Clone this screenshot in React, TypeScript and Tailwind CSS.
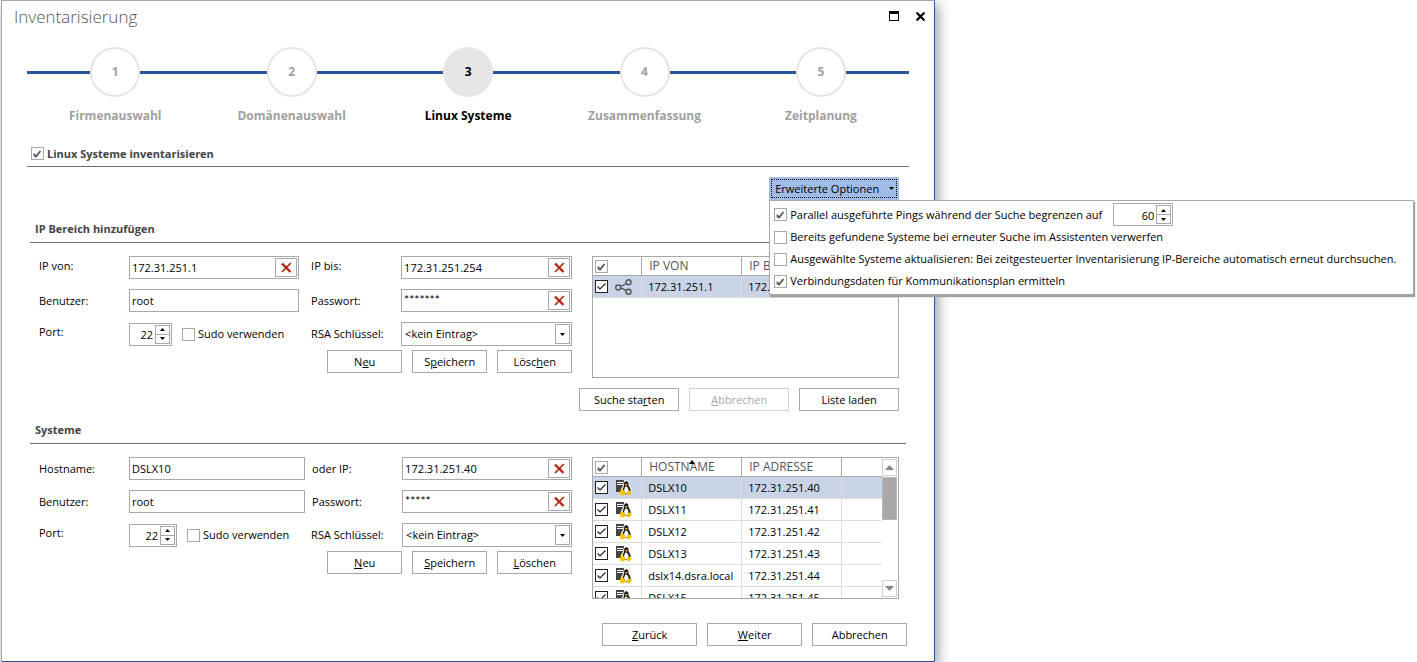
import { ReactNode } from "react";

const steps = ["Firmenauswahl", "Domänenauswahl", "Linux Systeme", "Zusammenfassung", "Zeitplanung"];

const hosts = [
    { name: "DSLX10", ip: "172.31.251.40" },
    { name: "DSLX11", ip: "172.31.251.41" },
    { name: "DSLX12", ip: "172.31.251.42" },
    { name: "DSLX13", ip: "172.31.251.43" },
    { name: "dslx14.dsra.local", ip: "172.31.251.44" },
    { name: "DSLX15", ip: "172.31.251.45" },
];

const CheckBox = ({ id, checked, dark, label }: { id?: string, checked?: boolean, dark?: boolean, label?: string }) => (
    <span className="relative block size-[13px] shrink-0">
        <input
            id={id}
            type="checkbox"
            aria-label={label}
            defaultChecked={checked}
            className={`peer block size-[13px] appearance-none border bg-white ${dark ? "border-[#222]" : "border-[#a8a8a8]"}`}
        />
        <svg viewBox="0 0 13 13" className="pointer-events-none absolute inset-0 hidden size-[13px] peer-checked:block" fill="none">
            {dark
                ? <path d="M2.5 6.5 L5 9 L10.5 3.5" stroke="#222" strokeWidth="1.2" />
                : <path d="M3.5 6.5 V8.5 L5 9.5 L9.5 4" stroke="#555" strokeWidth="1.8" />}
        </svg>
    </span>
);

const Field = ({ id, value, clear, secret }: { id: string, value: string, clear?: boolean, secret?: boolean }) => (
    <div className="flex h-[23px] border border-[#a8a8a8] bg-white p-px">
        <input
            id={id}
            type="text"
            defaultValue={value}
            className={`w-0 min-w-0 flex-1 px-px outline-none ${secret ? "pb-0.5 font-['Lato',sans-serif] text-xs" : ""}`}
        />
        {clear && (
            <button aria-label="Feld leeren" className="flex w-[22px] shrink-0 items-center justify-center border border-[#a8a8a8]">
                <svg viewBox="0 0 11 11" className="size-[11px]" fill="none" stroke="#b3260f">
                    <path d="M1 1.5 L9.5 10" strokeWidth="2.4" />
                    <path d="M9.8 1 L1 10" strokeWidth="1.7" />
                </svg>
            </button>
        )}
    </div>
);

const Spinner = ({ id, value, width }: { id: string, value: number, width: string }) => (
    <div className={`flex h-[23px] shrink-0 border border-[#a8a8a8] bg-white p-px ${width}`}>
        <input id={id} type="text" inputMode="numeric" defaultValue={value} className="w-0 min-w-0 flex-1 pt-0.5 pr-0.5 text-right outline-none" />
        <div className="flex w-[15px] shrink-0 flex-col">
            <button aria-label="Erhöhen" className="flex flex-1 items-center justify-center border border-[#a8a8a8]">
                <svg viewBox="0 0 5 3" className="h-[3px] w-[5px]"><path d="M0 3 L2.5 0 L5 3 Z" /></svg>
            </button>
            <button aria-label="Verringern" className="flex flex-1 items-center justify-center border border-t-0 border-[#a8a8a8]">
                <svg viewBox="0 0 5 3" className="h-[3px] w-[5px]"><path d="M0 0 L2.5 3 L5 0 Z" /></svg>
            </button>
        </div>
    </div>
);

const KeySelect = ({ id }: { id: string }) => (
    <div className="relative">
        <select id={id} className="block h-6 w-full appearance-none border border-[#a8a8a8] bg-white px-[3px] outline-none">
            <option>&lt;kein Eintrag&gt;</option>
        </select>
        <span className="pointer-events-none absolute inset-y-0.5 right-0.5 flex w-[15px] items-center justify-center border border-[#a8a8a8]">
            <svg viewBox="0 0 5 3" className="h-[3px] w-[5px]"><path d="M0 0 L2.5 3 L5 0 Z" /></svg>
        </span>
    </div>
);

const Button = ({ children, width, disabled }: { children: ReactNode, width: string, disabled?: boolean }) => (
    <button
        disabled={disabled}
        className={`h-[23px] border bg-white text-center ${width} ${disabled ? "border-[#d0d0d0] text-[#a8a8a8]" : "border-[#a8a8a8]"}`}
    >
        {children}
    </button>
);

const SectionTitle = ({ children }: { children: ReactNode }) => (
    <h2 className="h-[26px] border-b border-[#6e6e6e] pl-[5px] font-bold leading-6 text-[#444]">{children}</h2>
);

const ShareIcon = () => (
    <svg viewBox="0 0 17 16" className="h-4 w-[17px]" fill="none" stroke="#555" strokeWidth="1.4">
        <circle cx="3.2" cy="8.5" r="2.5" />
        <circle cx="13.5" cy="3.2" r="2.5" />
        <circle cx="13.5" cy="12.8" r="2.5" />
        <path d="M5.5 7.5 C7.5 6.5 9 6 11.3 4.5 M5.5 9.3 C8 9.5 9.5 10.5 11.3 11.6" />
    </svg>
);

const LinuxIcon = () => (
    <svg viewBox="0 0 16 16" className="size-4">
        <path d="M0 0 H8 V12 H0 Z" fill="#444" />
        <path d="M1 2.5 H7 M1 4.5 H7" stroke="#fff" />
        <path d="M10.3 0.5 C13 0.5 13.4 2.5 13.3 5 L15.5 9 V13 H5 V9 L7.3 5 C7.2 2.5 7.6 0.5 10.3 0.5 Z" fill="#fff" />
        <path d="M10.3 1.2 C12.2 1.2 12.6 2.8 12.5 5.2 C13.3 6.8 15 8.8 14.7 11.5 L12 13.4 H8.5 L6.2 10.5 C6.4 8.5 8 7 8.1 5.2 C8 2.8 8.4 1.2 10.3 1.2 Z" fill="#1a1a1a" />
        <path d="M9.3 6.5 C11 6.2 12.4 8 12.6 10 L11.4 13 H9 L8 10 Z" fill="#fff" />
        <path d="M8.9 4 H11.7 L10.3 6.2 Z" fill="#f5a800" />
        <path d="M4.3 10.5 L6.6 8.8 L9.4 13 L8 15.4 L3.8 14.4 Z M11.2 11.8 L13.5 10.2 L16 12.6 L13.3 15.4 L11 14.8 Z" fill="#ffc400" />
    </svg>
);

const App = () => {
    return (
        <div className="w-[66%] pl-px font-['Open_Sans','Noto_Sans',sans-serif] text-[11px] leading-4 text-black">
            <main className="min-h-screen border border-t-[#a8a8a8] border-r-[#2a579a] border-b-[#2a579a] border-l-[#a8a8a8] bg-white pb-[15px] shadow-[3px_4px_12px_rgba(0,0,0,0.4)]">
                <header className="flex h-8 items-center justify-between pl-3 pr-[9px]">
                    <h1 className="text-[17px] leading-8 font-light text-[#555]">Inventarisierung</h1>
                    <div className="flex items-center gap-[17px] pb-0.5">
                        <button aria-label="Maximieren" className="size-[10px] border border-t-[3px] border-black" />
                        <button aria-label="Schließen">
                            <svg viewBox="0 0 9 9" className="size-[9px]" stroke="#000" strokeWidth="2.2"><path d="M0.5 0.5 L8.5 8.5 M8.5 0.5 L0.5 8.5" /></svg>
                        </button>
                    </div>
                </header>

                <div className="px-[25px] pt-[14px]">
                    <ol className="flex text-xs font-bold text-[#a0a0a0]">
                        {steps.map((step, index) => {
                            const active = index === 2;
                            return (
                                <li key={step} className={`flex flex-1 flex-col items-center ${active ? "text-black" : ""}`}>
                                    <div className="flex w-full items-center">
                                        <span className="h-[3px] flex-1 bg-[#2a579a]" />
                                        <span className={`flex size-[50px] items-center justify-center rounded-full border-2 border-[#e6e6e6] ${active ? "bg-[#e6e6e6]" : ""}`}>{index + 1}</span>
                                        <span className="h-[3px] flex-1 bg-[#2a579a]" />
                                    </div>
                                    <span className="mt-[11px]">{step}</span>
                                </li>
                            );
                        })}
                    </ol>

                    <div className="mt-[17px] flex h-[26px] items-center gap-[3px] border-b border-[#6e6e6e] pl-1 font-bold text-[#444]">
                        <CheckBox id="inventory" checked />
                        <label htmlFor="inventory">Linux Systeme inventarisieren</label>
                    </div>

                    {/* extended options with the opened menu */}
                    <div className="mt-[10px] mr-[10px] flex justify-end">
                        <div className="relative w-[130px]">
                            <button aria-expanded="true" className="h-[23px] w-full bg-[#9fbce6] p-0.5">
                                <span className="flex h-full items-center justify-between border border-dotted border-black pl-[3px] pr-0.5">
                                    Erweiterte Optionen
                                    <svg viewBox="0 0 5 3" className="h-[3px] w-[5px]"><path d="M0 0 L2.5 3 L5 0 Z" /></svg>
                                </span>
                            </button>
                            <div className="absolute top-full left-0 z-10 w-[645px] border border-[#a8a8a8] bg-white py-0.5 pl-1 whitespace-nowrap shadow-[1px_2px_1px_#a0a0a0]">
                                <div className="flex h-[23px] items-center gap-[3px]">
                                    <CheckBox id="pings" checked />
                                    <label htmlFor="pings">Parallel ausgeführte Pings während der Suche begrenzen auf</label>
                                    <div className="ml-2"><Spinner id="ping-count" value={60} width="w-[60px]" /></div>
                                </div>
                                <div className="flex h-[22px] items-center gap-[3px]">
                                    <CheckBox id="discard" />
                                    <label htmlFor="discard">Bereits gefundene Systeme bei erneuter Suche im Assistenten verwerfen</label>
                                </div>
                                <div className="flex h-[22px] items-center gap-[3px]">
                                    <CheckBox id="update" />
                                    <label htmlFor="update">Ausgewählte Systeme aktualisieren: Bei zeitgesteuerter Inventarisierung IP-Bereiche automatisch erneut durchsuchen.</label>
                                </div>
                                <div className="flex h-[22px] items-center gap-[3px]">
                                    <CheckBox id="connections" checked />
                                    <label htmlFor="connections">Verbindungsdaten für Kommunikationsplan ermitteln</label>
                                </div>
                            </div>
                        </div>
                    </div>

                    <section className="mx-[3px] mt-[17px]">
                        <SectionTitle>IP Bereich hinzufügen</SectionTitle>
                        <div className="mt-[13px] flex gap-5 pr-[7px] pl-[9px]">
                            <div className="flex-1">
                                <div className="grid grid-cols-[90px_170fr_102px_171fr] items-center gap-y-[10px]">
                                    <label htmlFor="ip-from" className="pb-1">IP von:</label>
                                    <Field id="ip-from" value="172.31.251.1" clear />
                                    <label htmlFor="ip-to" className="pb-1 pl-3">IP bis:</label>
                                    <Field id="ip-to" value="172.31.251.254" clear />
                                    <label htmlFor="range-user">Benutzer:</label>
                                    <Field id="range-user" value="root" />
                                    <label htmlFor="range-pass" className="pl-3">Passwort:</label>
                                    <Field id="range-pass" value="*******" clear secret />
                                    <label htmlFor="range-port" className="pb-1">Port:</label>
                                    <div className="flex items-center">
                                        <Spinner id="range-port" value={22} width="w-[43px]" />
                                        <div className="ml-[10px] flex items-center gap-[3px] whitespace-nowrap">
                                            <CheckBox id="range-sudo" />
                                            <label htmlFor="range-sudo">Sudo verwenden</label>
                                        </div>
                                    </div>
                                    <label htmlFor="range-key" className="pl-3">RSA Schlüssel:</label>
                                    <KeySelect id="range-key" />
                                </div>
                                <div className="mt-1 flex justify-end gap-[10px]">
                                    <Button width="w-[75px]">N<u>e</u>u</Button>
                                    <Button width="w-[75px]">S<u>p</u>eichern</Button>
                                    <Button width="w-[75px]">Lösc<u>h</u>en</Button>
                                </div>
                            </div>
                            <div className="h-[122px] w-[307px] overflow-hidden border border-[#a8a8a8]">
                                <table className="w-full table-fixed border-separate border-spacing-0 text-left">
                                    <colgroup>
                                        <col className="w-[49px]" />
                                        <col className="w-[100px]" />
                                        <col className="w-[100px]" />
                                        <col />
                                    </colgroup>
                                    <thead>
                                        <tr className="h-[19px] text-xs text-[#555]">
                                            <th className="border-r border-b border-[#a8a8a8] pl-0.5"><CheckBox label="Alle" checked /></th>
                                            <th className="border-r border-b border-[#a8a8a8] pl-[7px] font-normal">IP VON</th>
                                            <th className="border-r border-b border-[#a8a8a8] pl-[7px] font-normal">IP B</th>
                                            <th className="border-b border-[#a8a8a8]"></th>
                                        </tr>
                                    </thead>
                                    <tbody>
                                        <tr className="h-[22px] bg-[#c9d5e6]">
                                            <td className="border-r border-b border-[#dcdcdc] pl-0.5">
                                                <div className="flex items-center gap-[7px]"><CheckBox label="172.31.251.1" checked dark /><ShareIcon /></div>
                                            </td>
                                            <td className="border-r border-b border-[#dcdcdc] pl-1.5">172.31.251.1</td>
                                            <td className="border-r border-b border-[#dcdcdc] pl-1.5">172.</td>
                                            <td className="border-b border-[#dcdcdc]"></td>
                                        </tr>
                                    </tbody>
                                </table>
                            </div>
                        </div>
                        <div className="mt-[10px] mr-[7px] flex justify-end gap-[10px]">
                            <Button width="w-[100px]">Suche sta<u>r</u>ten</Button>
                            <Button width="w-[100px]" disabled><u>A</u>bbrechen</Button>
                            <Button width="w-[100px]">Liste laden</Button>
                        </div>
                    </section>

                    <section className="mx-[3px] mt-[7px]">
                        <SectionTitle>Systeme</SectionTitle>
                        <div className="mt-[13px] flex gap-5 pr-[7px] pl-[9px]">
                            <div className="flex-1">
                                <div className="grid grid-cols-[90px_176fr_97px_170fr] items-center gap-y-[10px]">
                                    <label htmlFor="host">Hostname:</label>
                                    <Field id="host" value="DSLX10" />
                                    <label htmlFor="host-ip" className="pl-[7px]">oder IP:</label>
                                    <Field id="host-ip" value="172.31.251.40" clear />
                                    <label htmlFor="host-user">Benutzer:</label>
                                    <Field id="host-user" value="root" />
                                    <label htmlFor="host-pass" className="pl-[7px]">Passwort:</label>
                                    <Field id="host-pass" value="*****" clear secret />
                                    <label htmlFor="host-port" className="pb-1">Port:</label>
                                    <div className="flex items-center">
                                        <Spinner id="host-port" value={22} width="w-12" />
                                        <div className="ml-[10px] flex items-center gap-[3px] whitespace-nowrap">
                                            <CheckBox id="host-sudo" />
                                            <label htmlFor="host-sudo">Sudo verwenden</label>
                                        </div>
                                    </div>
                                    <label htmlFor="host-key" className="pl-1.5">RSA Schlüssel:</label>
                                    <KeySelect id="host-key" />
                                </div>
                                <div className="mt-1 flex justify-end gap-[10px]">
                                    <Button width="w-[75px]"><u>N</u>eu</Button>
                                    <Button width="w-[75px]"><u>S</u>peichern</Button>
                                    <Button width="w-[75px]"><u>L</u>öschen</Button>
                                </div>
                            </div>
                            <div className="flex h-[142px] w-[307px] overflow-hidden border border-[#a8a8a8]">
                                <div className="flex-1 overflow-hidden">
                                    <table className="w-full table-fixed border-separate border-spacing-0 text-left">
                                        <colgroup>
                                            <col className="w-[49px]" />
                                            <col className="w-[100px]" />
                                            <col className="w-[100px]" />
                                            <col />
                                        </colgroup>
                                        <thead>
                                            <tr className="h-[19px] text-xs text-[#555]">
                                                <th className="border-r border-b border-[#a8a8a8] pl-0.5"><CheckBox label="Alle" checked /></th>
                                                <th className="relative border-r border-b border-[#a8a8a8] pl-[7px] font-normal">
                                                    HOSTNAME
                                                    <svg viewBox="0 0 6 4" className="absolute top-0.5 left-[47px] h-1 w-1.5"><path d="M0 4 L3 0 L6 4 Z" /></svg>
                                                </th>
                                                <th className="border-r border-b border-[#a8a8a8] pl-[7px] font-normal">IP ADRESSE</th>
                                                <th className="border-b border-[#a8a8a8]"></th>
                                            </tr>
                                        </thead>
                                        <tbody>
                                            {hosts.map((host, index) => (
                                                <tr key={host.ip} className={`h-[22px] ${index === 0 ? "bg-[#c9d5e6]" : ""}`}>
                                                    <td className="border-r border-b border-[#dcdcdc] pl-0.5">
                                                        <div className="flex items-center gap-2"><CheckBox label={host.name} checked dark /><LinuxIcon /></div>
                                                    </td>
                                                    <td className="border-r border-b border-[#dcdcdc] pl-1.5 whitespace-nowrap">{host.name}</td>
                                                    <td className="border-r border-b border-[#dcdcdc] pl-1.5">{host.ip}</td>
                                                    <td className="border-b border-[#dcdcdc]"></td>
                                                </tr>
                                            ))}
                                        </tbody>
                                    </table>
                                </div>
                                <div className="flex w-4 shrink-0 flex-col p-px pl-0">
                                    <button aria-label="Nach oben" className="flex h-[17px] w-[15px] items-center justify-center border border-[#d0d0d0]">
                                        <svg viewBox="0 0 9 5" className="h-[5px] w-[9px]" fill="#888"><path d="M0 5 L4.5 0 L9 5 Z" /></svg>
                                    </button>
                                    <div className="mt-px h-[43px] w-[15px] border border-[#b8b8b8] bg-[#a8a8a8]" />
                                    <button aria-label="Nach unten" className="mt-auto flex h-[17px] w-[15px] items-center justify-center border border-[#d0d0d0]">
                                        <svg viewBox="0 0 9 5" className="h-[5px] w-[9px]" fill="#888"><path d="M0 0 L4.5 5 L9 0 Z" /></svg>
                                    </button>
                                </div>
                            </div>
                        </div>
                    </section>

                    <footer className="mt-6 mr-0.5 flex justify-end gap-[10px]">
                        <Button width="w-[95px]"><u>Z</u>urück</Button>
                        <Button width="w-[95px]"><u>W</u>eiter</Button>
                        <Button width="w-[95px]">Abbrechen</Button>
                    </footer>
                </div>
            </main>
        </div>
    );
};

export default App;
